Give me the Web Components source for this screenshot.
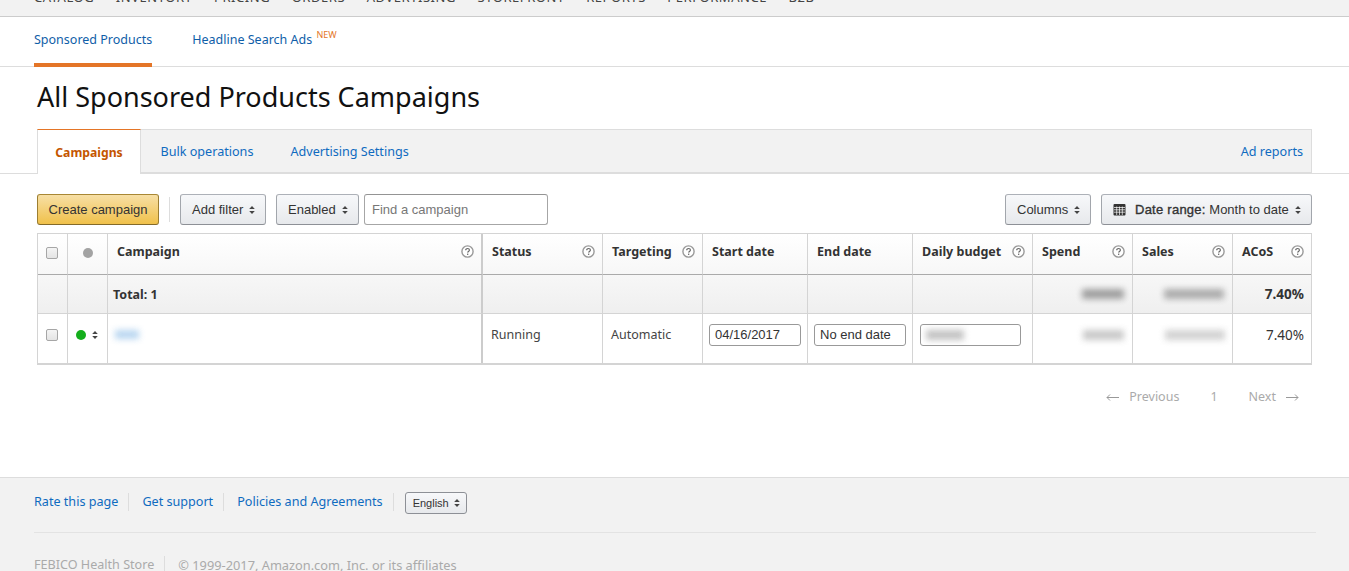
<!DOCTYPE html>
<html><head><meta charset="utf-8">
<style>
html,body{margin:0;padding:0;height:571px;overflow:hidden;background:#fff}
body{font-family:"Noto Sans","Open Sans",sans-serif;font-size:12.5px;color:#333}
</style></head><body>
<seller-nav></seller-nav>
<sub-nav></sub-nav>
<page-title>All Sponsored Products Campaigns</page-title>
<tab-bar></tab-bar>
<tool-bar></tool-bar>
<campaign-table></campaign-table>
<pager-row></pager-row>
<page-footer></page-footer>
<script>
const SEL='<svg width="6" height="8" viewBox="0 0 6 8" style="flex:none"><path d="M3 0L5.8 3H.2zM3 8L.2 5h5.6z" fill="#444"/></svg>';
const Q='<svg width="13" height="13" viewBox="0 0 13 13" style="flex:none"><circle cx="6.5" cy="6.5" r="5.6" fill="#fff" stroke="#999" stroke-width="1.4"/><path d="M4.7 5.2c0-1 .8-1.7 1.9-1.7s1.8.7 1.8 1.6c0 1.3-1.8 1.3-1.8 2.5" fill="none" stroke="#666" stroke-width="1.2"/><rect x="6" y="8.6" width="1.3" height="1.3" fill="#666"/></svg>';
const BTN=`.btn{box-sizing:border-box;display:flex;align-items:center;height:31px;border:1px solid #adb1b8;border-color:#adb1b8 #a2a6ac #8d9096;border-radius:3px;background:linear-gradient(#f7f8fa,#e7e9ec);font:13px "Liberation Sans",Arial,sans-serif;color:#333;white-space:nowrap}`;
function def(name,html){customElements.define(name,class extends HTMLElement{constructor(){super();this.attachShadow({mode:'open'}).innerHTML=html}})}

def('seller-nav',`<style>:host{display:block;box-sizing:border-box;height:17px;background:#f2f2f2;border-bottom:1px solid #ccc;overflow:hidden}
div{display:flex;gap:21.5px;padding-left:34px;margin-top:-12px;font-size:13px;line-height:18px;letter-spacing:.55px;color:#444;white-space:nowrap}</style>
<div><span>CATALOG</span><span>INVENTORY</span><span>PRICING</span><span>ORDERS</span><span>ADVERTISING</span><span>STOREFRONT</span><span>REPORTS</span><span>PERFORMANCE</span><span>B2B</span></div>`);

def('sub-nav',`<style>:host{display:flex;box-sizing:border-box;height:50px;border-bottom:1px solid #ddd;padding-left:34px;gap:40px;font-size:12.5px;color:#0f5ea8}
a{display:block;box-sizing:border-box;height:50px;padding-top:14px;line-height:18px}
a.on{border-bottom:4px solid #e47527}
sup{font-size:9px;color:#e47527;line-height:0;vertical-align:6px;margin-left:1px}</style>
<a class="on">Sponsored Products</a><a>Headline Search Ads <sup>NEW</sup></a>`);

def('page-title',`<style>:host{display:block;height:62px;box-sizing:border-box;padding:11px 0 0 37px;font-size:27px;line-height:38px;color:#111;white-space:nowrap}</style><slot></slot>`);

def('tab-bar',`<style>:host{display:block;height:45px;box-sizing:border-box;border-bottom:1px solid #ddd}
.bar{box-sizing:border-box;margin:0 37px;height:45px;display:flex;align-items:stretch;background:#f2f2f2;border:1px solid #ddd;border-bottom:2px solid #ddd;border-left:0;font-size:12.6px;color:#0f6bc0}
.t{display:flex;align-items:center;padding:2px 18.5px 0;line-height:18px}
.on{box-sizing:border-box;width:104px;margin:-1px 1px -2px 0;height:45px;justify-content:center;padding:2px 0 0;background:#fff;border-top:1px solid #e47527;border-left:1px solid #ddd;border-right:1px solid #ddd;color:#c45500;font-weight:700;font-size:12.2px}
.end{margin-left:auto;padding:2px 8px 0}</style>
<div class="bar"><div class="t on">Campaigns</div><div class="t">Bulk operations</div><div class="t">Advertising Settings</div><div class="t end">Ad reports</div></div>`);

def('tool-bar',`<style>:host{display:flex;align-items:center;height:31px;margin:20px 37px 0;gap:10px}${BTN}
.y{border-color:#a88734 #9c7e31 #846a29;background:linear-gradient(#f7dfa5,#f0c14b);padding:0 11px;width:122px;justify-content:center}
.sep{width:1px;height:25px;background:#ddd}
.s{padding:0 10px 0 11px;justify-content:space-between}
input{box-sizing:border-box;height:31px;width:184px;border:1px solid #a6a6a6;border-top-color:#949494;border-radius:3px;padding:0 7px;font:13px "Liberation Sans",Arial,sans-serif;margin-left:-5px;color:#333}
input::placeholder{color:#777;opacity:1}
.grow{flex:1}b{font-weight:400;-webkit-text-stroke:.35px #333;letter-spacing:.25px}</style>
<div class="btn y">Create campaign</div><div class="sep"></div><div class="btn s" style="width:86px">Add filter ${SEL}</div><div class="btn s" style="width:83px">Enabled ${SEL}</div><input placeholder="Find a campaign"><div class="grow"></div>
<div class="btn s" style="width:86px">Columns ${SEL}</div>
<div class="btn s" style="width:211px;padding-left:11px;justify-content:flex-start"><svg width="13" height="13" viewBox="0 0 13 13" style="flex:none;margin-right:9px"><rect x=".5" y="1" width="12" height="11.5" rx="1" fill="#333"/><path d="M1 4.5h11M1 6.8h11M1 9.2h11M3.7 3.5v8.5M6.5 3.5v8.5M9.3 3.5v8.5" stroke="#fff" stroke-width=".7"/></svg><b>Date range:</b>&nbsp;Month to date<span style="flex:1"></span>${SEL}</div>`);

function tinput(v,w){return `<span class="in" style="width:${w}px">${v}</span>`}
const blur=(w,c,h)=>`<span class="bl" style="width:${w}px;background:${c};height:${h||9}px"></span>`;
const cols=[['',30],['',40],['Campaign',375,1],['Status',120,1],['Targeting',100,1],['Start date',105],['End date',105],['Daily budget',120,1],['Spend',100,1],['Sales',100,1],['ACoS',78,1]];
const gt=cols.map(c=>c[1]+'px').join(' ');
const body=[
'<div class="c h" style="padding-right:1px;padding-bottom:3px"><span class="cb"></span></div>','<div class="c h" style="padding-bottom:3px"><span class="dot" style="background:#a3a3a3"></span></div>',
...cols.slice(2).map((c,i)=>`<div class="c h lab ${i==0?'dbl':''}"><span>${c[0]}</span>${c[2]?Q:''}</div>`),
'<div class="c t"></div>','<div class="c t"></div>','<div class="c t lab dbl tot" style="padding-left:5px"><span>Total: 1</span></div>','<div class="c t"></div>','<div class="c t"></div>','<div class="c t"></div>','<div class="c t"></div>','<div class="c t"></div>',
`<div class="c t r" style="padding-right:8px">${blur(42,'#9a9a9a',10)}</div>`,`<div class="c t r" style="padding-right:8px">${blur(60,'#a8a8a8',10)}</div>`,'<div class="c t r pc" style="font-weight:700;color:#333">7.40%</div>',
'<div class="c b" style="padding-right:1px"><span class="cb"></span></div>',`<div class="c b" style="gap:6px;padding-right:1px"><span class="dot" style="background:#14ae1c"></span>${SEL}</div>`,
`<div class="c b dbl" style="justify-content:flex-start;padding-left:7px">${blur(24,'#b5d4f0',9)}</div>`,
'<div class="c b lf">Running</div>','<div class="c b lf">Automatic</div>',
`<div class="c b">${tinput('04/16/2017',92)}</div>`,`<div class="c b">${tinput('No end date',92)}</div>`,
`<div class="c b" style="justify-content:flex-start;padding-left:7px"><span class="in" style="width:101px">${blur(38,'#c0c0c0',10)}</span></div>`,
`<div class="c b r" style="padding-right:8px">${blur(41,'#c6c6c6',10)}</div>`,`<div class="c b r" style="padding-right:7px">${blur(60,'#d0d0d0',10)}</div>`,'<div class="c b r pc">7.40%</div>'
].join('');
def('campaign-table',`<style>:host{display:block;margin:8px 37px 0;width:1275px;box-sizing:border-box;font-size:12.5px}
.g{display:grid;grid-template-columns:${gt};grid-template-rows:41px 39px 49px;box-sizing:border-box;border:1px solid #d4d4d4;border-bottom:2px solid #d4d4d4;width:1275px}
.c{box-sizing:border-box;display:flex;align-items:center;justify-content:center;border-right:1px solid #d4d4d4;min-width:0;padding:0}
.c:nth-child(11n){border-right:0}
.h{background:linear-gradient(#fff,#f7f7f7);border-bottom:1px solid #aaa;font-weight:700;color:#333}
.lab{justify-content:space-between;padding:0 7px 6px 9px}
.t{background:linear-gradient(#f7f7f7,#efefef);border-bottom:1px solid #d4d4d4;font-weight:700}
.tot{justify-content:flex-start;padding-bottom:0}
.b{padding-bottom:8px}
.dbl{border-right-width:2px;border-right-color:#ccc}
.r{justify-content:flex-end;padding-right:7px}
.pc{font-size:13.5px}
.lf{justify-content:flex-start;padding-left:8px;color:#444}
.cb{box-sizing:border-box;width:12px;height:12px;border:1px solid #a6a6a6;border-radius:2px;background:linear-gradient(#f4f4f4,#e4e4e4)}
.dot{display:block;width:10px;height:10px;border-radius:50%}
.bl{display:block;filter:blur(3px);opacity:.95}
.in{box-sizing:border-box;display:flex;align-items:center;height:22px;padding:0 5px;border:1px solid #999;border-radius:3px;background:#fff;font:13px "Liberation Sans",Arial,sans-serif;color:#333;overflow:hidden}
</style><div class="g">${body}</div>`);

def('pager-row',`<style>:host{display:flex;justify-content:flex-end;align-items:center;height:18px;margin:23px 37px 0 0;padding-right:13px;color:#aaa;font-size:12.5px;line-height:18px}
span{white-space:nowrap}svg{margin:1px 0 0}</style>
<svg width="13" height="7" viewBox="0 0 13 7"><path d="M13 3.5H1M4 .5L1 3.5l3 3" fill="none" stroke="#999"/></svg><span style="margin:0 31px 0 10px">Previous</span><span>1</span><span style="margin:0 10px 0 31px">Next</span><svg width="13" height="7" viewBox="0 0 13 7"><path d="M0 3.5h12M9 .5l3 3-3 3" fill="none" stroke="#999"/></svg>`);

def('page-footer',`<style>:host{display:block;box-sizing:border-box;margin-top:71px;height:94px;background:#f2f2f2;border-top:1px solid #ddd;padding:0 34px;font-size:12.6px;overflow:hidden}
.l{display:flex;align-items:center;box-sizing:border-box;height:55px;border-bottom:1px solid #e3e3e3;width:1282px;color:#0f6bc0}
.l a{display:block;line-height:18px;padding-right:10px;margin-right:13px;border-right:1px solid #ddd;margin-top:-7px;height:18px}
.sel{box-sizing:border-box;display:flex;align-items:center;gap:5px;height:22px;width:62px;margin:-5px 0 0 11px;padding-left:7px;border:1px solid #8d9096;border-radius:3px;background:linear-gradient(#f7f8fa,#e7e9ec);font:11px "Liberation Sans",Arial,sans-serif;color:#333}
.c{display:flex;margin-top:23px;color:#aaa;line-height:18px;height:18px}
.c span:first-child{padding-right:10px;border-right:1px solid #ddd;margin-right:13px}
.c span+span{font-size:12.8px}</style>
<div class="l"><a>Rate this page</a><a>Get support</a><a style="margin-right:0">Policies and Agreements</a><div class="sel">English ${SEL}</div></div>
<div class="c"><span>FEBICO Health Store</span><span>© 1999-2017, Amazon.com, Inc. or its affiliates</span></div>`);
</script></body></html>
